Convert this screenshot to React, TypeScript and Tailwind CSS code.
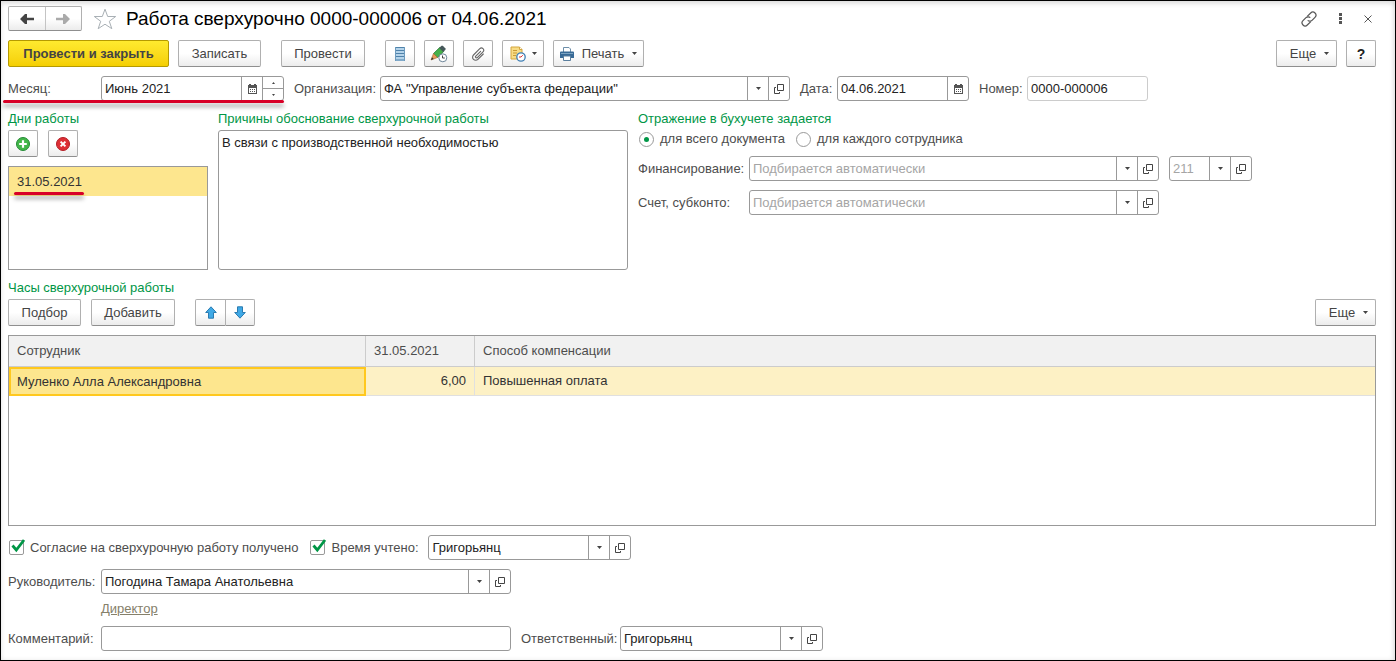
import { useState } from 'react';
import type { ReactNode } from 'react';

const CaretIcon = () => (
  <svg width="5" height="3" viewBox="0 0 5 3" className="shrink-0" aria-hidden="true">
    <path d="M0 0h5L2.5 3z" fill="#444" />
  </svg>
);

const OpenIcon = () => (
  <svg width="10" height="10" viewBox="0 0 10 10" fill="none" stroke="#444" aria-hidden="true">
    <path d="M3.5.5h6v6h-6z" />
    <path d="M2 3.5H.5v6h5V8" />
  </svg>
);

const CalendarIcon = () => (
  <svg width="9" height="10" viewBox="0 0 9 10" aria-hidden="true">
    <path d="M0 1h1V0h2v1h3V0h2v1h1v9H0z" fill="#555" />
    <path d="M1 4h7v5H1z" fill="#fff" />
    <path d="M2 5h1v1H2zM4 5h1v1H4zM6 5h1v1H6zM2 7h1v1H2zM4 7h1v1H4zM6 7h1v1H6z" fill="#555" />
  </svg>
);

const ArrowIcon = ({ color, flip }: { color: string; flip?: boolean }) => (
  <svg width="14" height="10" viewBox="0 0 14 10" className={flip ? 'rotate-180' : ''} aria-hidden="true">
    <path d="M0 5 5 0h2v3.700h7v2.600H7V10H5z" fill={color} />
  </svg>
);

const MoveIcon = ({ down }: { down?: boolean }) => (
  <svg width="12" height="13" viewBox="0 0 12 13" className={down ? 'rotate-180' : ''} aria-hidden="true">
    <path d="M6 .8 11.3 6.5H8.5v5.7h-5V6.5H.7z" fill="#3fa9e6" stroke="#2b7bb0" />
  </svg>
);

const StarIcon = () => (
  <svg width="24" height="22" viewBox="0 0 24 22" aria-hidden="true">
    <path
      d="m12 1.2 2.7 7.3h8l-6.400 4.800 2.500 7.400-6.800-4.500-6.800 4.500 2.500-7.400L1.300 8.500h8z"
      fill="#fff"
      stroke="#a9b0b5"
    />
  </svg>
);

const LinkIcon = () => (
  <svg width="16" height="16" viewBox="0 0 16 16" fill="none" stroke="#555" strokeWidth="1.2" aria-hidden="true">
    <path d="M6.200 5.400 9.700 2A3 3 0 0 1 14 6.300l-3 3a3 3 0 0 1-4.300 0" />
    <path d="M9.800 10.600 6.300 14A3 3 0 0 1 2 9.700l3-3a3 3 0 0 1 4.300 0" />
  </svg>
);

const ListIcon = () => (
  <svg width="10" height="14" viewBox="0 0 10 14" aria-hidden="true">
    <path d="M0 0h10v14H0z" fill="#b4d3ea" />
    <path d="M0 .5h10M0 3.500h10M0 6.500h10M0 9.500h10M0 13h10" stroke="#4f82aa" />
    <path d="M.5 0v14M9.500 0v14" stroke="#6c9abd" />
  </svg>
);

const PencilIcon = () => (
  <svg width="18" height="18" viewBox="0 0 18 18" aria-hidden="true">
    <path d="m3.500 8.500 6.200-6 4 4-6.200 6z" fill="#45b04a" stroke="#2b7a35" strokeWidth=".8" />
    <path d="m9.200 3 2.300-2.300h1.300L15.500 3.400v1.300L13.200 7z" fill="#46585a" />
    <path d="m1 15 2.500-6.500 4 4z" fill="#e79a5a" stroke="#a0632f" strokeWidth=".6" />
    <path d="m1 15 1-2.700 1.700 1.700z" fill="#333" />
    <circle cx="12.800" cy="12.800" r="4" fill="#fff" stroke="#6d8598" />
    <path d="M12.500 10.500V13h2.300" fill="none" stroke="#444" />
  </svg>
);

const ClipIcon = () => (
  <svg width="14" height="14" viewBox="0 0 14 14" fill="none" stroke="#666" strokeWidth="1.100" strokeLinecap="round" aria-hidden="true">
    <path d="M9.600 4.300 4.800 9.100a1 1 0 0 0 1.500 1.500l5.700-5.700a2.200 2.200 0 0 0-3.200-3.200L2.500 8a3.100 3.100 0 0 0 4.400 4.400L12.300 7" />
  </svg>
);

const NoteIcon = () => (
  <svg width="16" height="16" viewBox="0 0 16 16" aria-hidden="true">
    <path d="M1 1h8.500L12 3.500V13H1z" fill="#f8dc85" stroke="#d3a63e" />
    <path d="M9.500 1v2.500H12" fill="#fff" stroke="#d3a63e" />
    <path d="M3 4.500h4M3 7h4M3 9.500h3" stroke="#c99b35" />
    <circle cx="11" cy="11" r="4.200" fill="#fff" stroke="#3f7fb4" strokeWidth="1.300" />
    <path d="m11 11 1.800-1.800M11 11H9" stroke="#d33" />
  </svg>
);

const PrinterIcon = () => (
  <svg width="14" height="14" viewBox="0 0 14 14" aria-hidden="true">
    <path d="M3.500 5V.5H9l1.500 1.500v3" fill="#fff" stroke="#6d8ea9" />
    <path d="M1 4.500h12a1 1 0 0 1 1 1V11H0V5.500a1 1 0 0 1 1-1z" fill="#386a96" />
    <path d="M1 6.500h12" stroke="#7ba3c2" />
    <path d="M3.500 9h7v4.500h-7z" fill="#fff" stroke="#5b7f9e" />
  </svg>
);

const AddIcon = () => (
  <svg width="14" height="14" viewBox="0 0 14 14" aria-hidden="true">
    <circle cx="7" cy="7" r="6.5" fill="#43b649" stroke="#248a35" />
    <path d="M7 3.200v7.600M3.200 7h7.600" stroke="#fff" strokeWidth="2.2" />
  </svg>
);

const RemoveIcon = () => (
  <svg width="14" height="14" viewBox="0 0 14 14" aria-hidden="true">
    <circle cx="7" cy="7" r="6.5" fill="#dd2f35" stroke="#b31d25" />
    <path d="m4.600 4.600 4.800 4.800m0-4.800L4.600 9.400" stroke="#fff" strokeWidth="2" />
  </svg>
);

const buttonLook =
  'flex items-center justify-center shrink-0 rounded-[2px] border border-[#b0b0b0] border-b-[#8f8f8f] bg-linear-to-b from-white from-50% to-[#ececec] text-[#444]';

const Button = ({ className = '', label, children }: { className?: string; label?: string; children: ReactNode }) => (
  <button type="button" aria-label={label} className={`${buttonLook} h-[27px] ${className}`}>
    {children}
  </button>
);

type FieldProps = {
  id: string;
  value?: string;
  placeholder?: string;
  className?: string;
  border?: string;
  label?: string;
  kind?: 'combo' | 'date' | 'text';
};

const sideButton = 'flex w-[21px] shrink-0 items-center justify-center border-l border-[#999]';

const Field = ({ id, value = '', placeholder, className = '', border = 'border-[#999]', label, kind = 'combo' }: FieldProps) => {
  const [text, setText] = useState(value);

  return (
    <div className={`flex h-[25px] min-w-0 overflow-hidden rounded-[3px] border bg-white ${border} ${className}`}>
      <input
        id={id}
        type="text"
        aria-label={label}
        value={text}
        placeholder={placeholder}
        onChange={(e) => setText(e.target.value)}
        className="w-0 min-w-0 flex-1 px-[3px] text-[#222] outline-none placeholder:text-[#a5a5a5]"
      />
      {kind === 'combo' && (
        <>
          <button type="button" aria-label="Выбрать" className={sideButton}><CaretIcon /></button>
          <button type="button" aria-label="Открыть" className={sideButton}><OpenIcon /></button>
        </>
      )}
      {kind === 'date' && (
        <button type="button" aria-label="Календарь" className={sideButton}><CalendarIcon /></button>
      )}
    </div>
  );
};

const CheckBox = ({ id, children }: { id: string; children: ReactNode }) => (
  <label htmlFor={id} className="flex shrink-0 items-center gap-[6px]">
    <span className="relative size-[15px]">
      <input id={id} type="checkbox" defaultChecked className="peer block size-[15px] appearance-none rounded-[2px] border border-[#999] bg-white" />
      <svg width="16" height="15" viewBox="0 0 16 15" className="pointer-events-none absolute -top-px left-px hidden peer-checked:block" aria-hidden="true">
        <path d="m2.500 6.500 3.800 4.500L14 1" fill="none" stroke="#009646" strokeWidth="2.8" />
      </svg>
    </span>
    {children}
  </label>
);

const Radio = ({ value, checked, onChange, children }: { value: string; checked: boolean; onChange: (v: string) => void; children: ReactNode }) => (
  <label className="flex shrink-0 items-center gap-[6px]">
    <span className="relative size-[15px]">
      <input
        type="radio"
        name="reflection"
        value={value}
        checked={checked}
        onChange={() => onChange(value)}
        className="peer block size-[15px] appearance-none rounded-full border border-[#999] bg-white"
      />
      <span className="pointer-events-none absolute inset-[5px] hidden rounded-full bg-[#009646] peer-checked:block" />
    </span>
    {children}
  </label>
);

const redLine = 'pointer-events-none absolute h-[3px] rounded-full bg-[#d80027] shadow-[0_4px_4px_rgba(0,0,0,0.35)]';

const App = () => {
  const [month, setMonth] = useState('Июнь 2021');
  const [reason, setReason] = useState('В связи с производственной необходимостью');
  const [reflection, setReflection] = useState('document');

  return (
    <main className="flex min-h-screen flex-col border border-black bg-white pt-[5px] pr-[19px] pb-[9px] pl-[7px] font-['Liberation_Sans',Arial,sans-serif] text-[13px] leading-[16px] text-[#4d4d4d] shadow-[inset_0_3px_5px_rgba(0,0,0,0.1),inset_-2px_0_5px_rgba(0,0,0,0.08)]">
      <header className="flex h-[25px] items-center">
        <div className="flex h-[25px] w-[74px] shrink-0 rounded-[2px] border border-[#b0b0b0] border-b-[#8f8f8f] bg-linear-to-b from-white from-50% to-[#ececec]">
          <button type="button" aria-label="Назад" className="flex flex-1 items-center justify-center">
            <ArrowIcon color="#444" />
          </button>
          <button type="button" aria-label="Вперед" className="flex flex-1 items-center justify-center border-l border-[#c4c4c4]">
            <ArrowIcon color="#aaa" flip />
          </button>
        </div>
        <button type="button" aria-label="В избранное" className="mr-[9px] ml-[11px]"><StarIcon /></button>
        <h1 className="text-[19px] leading-[24px] text-black">Работа сверхурочно 0000-000006 от 04.06.2021</h1>
        <div className="ml-auto flex items-center gap-[22px] pr-[4px]">
          <button type="button" aria-label="Ссылка"><LinkIcon /></button>
          <button type="button" aria-label="Меню">
            <svg width="3" height="11" viewBox="0 0 3 11" fill="#555" aria-hidden="true">
              <path d="M0 0h3v3H0zM0 4h3v3H0zM0 8h3v3H0z" />
            </svg>
          </button>
          <button type="button" aria-label="Закрыть">
            <svg width="8" height="8" viewBox="0 0 8 8" stroke="#555" aria-hidden="true">
              <path d="m.5.5 7 7m0-7-7 7" />
            </svg>
          </button>
        </div>
      </header>

      <div className="mt-[9px] flex items-center">
        <button
          type="button"
          className="h-[27px] w-[161px] shrink-0 rounded-[2px] border border-[#b59a00] bg-linear-to-b from-[#ffea2e] to-[#f5cf00] font-bold text-[#444]"
        >
          Провести и закрыть
        </button>
        <Button className="ml-[9px] w-[83px]">Записать</Button>
        <Button className="ml-[20px] w-[84px]">Провести</Button>
        <Button label="Список" className="ml-[20px] w-[30px]"><ListIcon /></Button>
        <Button label="Изменить" className="ml-[9px] w-[30px]"><PencilIcon /></Button>
        <Button label="Файлы" className="ml-[9px] w-[30px]"><ClipIcon /></Button>
        <Button label="Задачи" className="ml-[9px] w-[42px] gap-[6px]"><NoteIcon /><CaretIcon /></Button>
        <Button className="ml-[9px] w-[91px] gap-[8px]"><PrinterIcon />Печать<CaretIcon /></Button>
        <Button className="ml-auto w-[61px] gap-[8px] pl-[6px]">Еще<CaretIcon /></Button>
        <Button label="Справка" className="ml-[9px] w-[30px]"><b className="text-[14px] text-[#222]">?</b></Button>
      </div>

      <div className="mt-[9px] flex items-center">
        <div className="relative flex w-[276px] shrink-0 items-center">
          <label htmlFor="month" className="w-[93px] shrink-0">Месяц:</label>
          <div className="flex h-[25px] flex-1 rounded-[3px] border border-[#999] bg-white">
            <input
              id="month"
              type="text"
              value={month}
              onChange={(e) => setMonth(e.target.value)}
              className="w-0 flex-1 px-[3px] text-[#222] outline-none"
            />
            <button type="button" aria-label="Календарь" className={sideButton}><CalendarIcon /></button>
            <div className="flex w-[21px] shrink-0 flex-col border-l border-[#999]">
              <button type="button" aria-label="Больше" className="flex flex-1 items-center justify-center">
                <svg width="3" height="2" viewBox="0 0 3 2" aria-hidden="true"><path d="M0 2h3L1.500 0z" fill="#444" /></svg>
              </button>
              <button type="button" aria-label="Меньше" className="flex flex-1 items-center justify-center border-t border-[#999]">
                <svg width="3" height="2" viewBox="0 0 3 2" aria-hidden="true"><path d="M0 0h3L1.500 2z" fill="#444" /></svg>
              </button>
            </div>
          </div>
          <span className={`${redLine} right-0 -bottom-[2px] -left-[5px]`} />
        </div>
        <label htmlFor="org" className="ml-[10px] w-[86px] shrink-0">Организация:</label>
        <Field id="org" value={'ФА "Управление субъекта федерации"'} className="max-w-[410px] flex-1" />
        <label htmlFor="date" className="ml-[10px] w-[37px] shrink-0">Дата:</label>
        <Field id="date" value="04.06.2021" kind="date" className="w-[132px]" />
        <label htmlFor="number" className="ml-[10px] w-[48px] shrink-0">Номер:</label>
        <Field id="number" value="0000-000006" kind="text" border="border-[#ccc]" className="w-[121px]" />
      </div>

      <div className="mt-[10px] flex gap-[10px]">
        <section className="flex w-[200px] shrink-0 flex-col">
          <h2 className="text-[#009646]">Дни работы</h2>
          <div className="mt-[3px] flex gap-[10px]">
            <Button label="Добавить день" className="w-[30px]"><AddIcon /></Button>
            <Button label="Удалить день" className="w-[30px]"><RemoveIcon /></Button>
          </div>
          <ul className="mt-[9px] h-[104px] border border-[#999]">
            <li className="flex h-[29px] items-center bg-[#fde68e] px-[8px] text-[#333]">
              <span className="relative">
                31.05.2021
                <span className={`${redLine} -right-[2px] -bottom-[5px] -left-[3px]`} />
              </span>
            </li>
          </ul>
        </section>

        <section className="flex max-w-[410px] flex-1 flex-col">
          <label htmlFor="reason" className="text-[#009646]">Причины обоснование сверхурочной работы</label>
          <textarea
            id="reason"
            value={reason}
            onChange={(e) => setReason(e.target.value)}
            className="mt-[3px] flex-1 resize-none rounded-[3px] border border-[#999] px-[3px] py-[4px] text-[#222] outline-none"
          />
        </section>

        <section className="min-w-0 shrink-0">
          <h2 className="text-[#009646]">Отражение в бухучете задается</h2>
          <div className="mt-[4px] flex gap-[11px] pl-px">
            <Radio value="document" checked={reflection === 'document'} onChange={setReflection}>для всего документа</Radio>
            <Radio value="employee" checked={reflection === 'employee'} onChange={setReflection}>для каждого сотрудника</Radio>
          </div>
          <div className="mt-[9px] flex items-center">
            <label htmlFor="financing" className="w-[111px] shrink-0">Финансирование:</label>
            <Field id="financing" placeholder="Подбирается автоматически" className="w-[410px]" />
            <Field id="kosgu" label="КОСГУ" placeholder="211" className="ml-[10px] w-[83px]" />
          </div>
          <div className="mt-[9px] flex items-center">
            <label htmlFor="account" className="w-[111px] shrink-0">Счет, субконто:</label>
            <Field id="account" placeholder="Подбирается автоматически" className="w-[410px]" />
          </div>
        </section>
      </div>

      <section className="mt-[10px] flex flex-1 flex-col">
        <h2 className="text-[#009646]">Часы сверхурочной работы</h2>
        <div className="mt-[3px] flex items-center">
          <Button className="w-[73px]">Подбор</Button>
          <Button className="ml-[10px] w-[84px]">Добавить</Button>
          <div className="ml-[20px] flex">
            <Button label="Вверх" className="w-[31px] rounded-r-none"><MoveIcon /></Button>
            <Button label="Вниз" className="w-[29px] rounded-l-none border-l-0"><MoveIcon down /></Button>
          </div>
          <Button className="ml-auto w-[61px] gap-[8px] pl-[6px]">Еще<CaretIcon /></Button>
        </div>

        <div className="mt-[9px] flex-1 border border-[#999]">
          <table className="w-full table-fixed border-separate border-spacing-0 text-left">
            <colgroup>
              <col className="w-[357px]" />
              <col className="w-[109px]" />
              <col />
            </colgroup>
            <thead>
              <tr className="h-[31px] bg-[#f1f1f1]">
                <th className="border-r border-b border-[#ccc] px-[8px] font-normal">Сотрудник</th>
                <th className="border-r border-b border-[#ccc] px-[8px] font-normal">31.05.2021</th>
                <th className="border-b border-[#ccc] px-[8px] font-normal">Способ компенсации</th>
              </tr>
            </thead>
            <tbody>
              <tr className="h-[29px] bg-[#fdf1c5] text-[#333]">
                <td className="border-2 border-[#ffc81e] bg-[#fde68e] px-[6px]">Муленко Алла Александровна</td>
                <td className="border-r border-b border-[#e0e0e0] px-[8px] text-right">6,00</td>
                <td className="border-b border-[#e0e0e0] px-[8px]">Повышенная оплата</td>
              </tr>
            </tbody>
          </table>
        </div>
      </section>

      <div className="mt-[9px] flex items-center pl-px">
        <CheckBox id="consent">Согласие на сверхурочную работу получено</CheckBox>
        <span className="ml-[12px] w-[118px] shrink-0"><CheckBox id="accounted">Время учтено:</CheckBox></span>
        <Field id="accountedBy" label="Время учтено" value="Григорьянц" className="w-[203px]" />
      </div>

      <div className="mt-[9px] flex items-center">
        <label htmlFor="manager" className="w-[93px] shrink-0">Руководитель:</label>
        <Field id="manager" value="Погодина Тамара Анатольевна" className="w-[410px]" />
      </div>
      <a href="#position" className="mt-[7px] ml-[93px] self-start text-[#85806a] underline">Директор</a>

      <div className="mt-[9px] flex items-center">
        <label htmlFor="comment" className="w-[93px] shrink-0">Комментарий:</label>
        <Field id="comment" kind="text" className="w-[410px]" />
        <label htmlFor="responsible" className="ml-[10px] w-[99px] shrink-0">Ответственный:</label>
        <Field id="responsible" value="Григорьянц" className="w-[203px]" />
      </div>
    </main>
  );
};

export default App;
